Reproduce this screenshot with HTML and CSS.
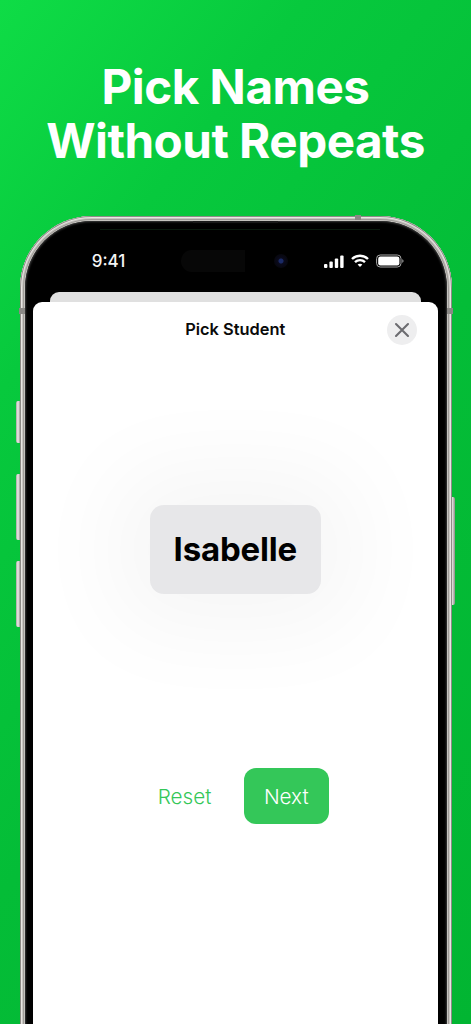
FILE: index.html
```html
<!DOCTYPE html>
<html lang="en">
<head>
<meta charset="utf-8">
<title>Pick Names Without Repeats</title>
<link rel="stylesheet" href="styles.css">
</head>
<body>
<main class="poster">
  <h1 class="headline">Pick Names<br>Without Repeats</h1>
  <div class="phone">
    <span class="side-btn btn-action"></span>
    <span class="side-btn btn-up"></span>
    <span class="side-btn btn-down"></span>
    <span class="side-btn btn-power"></span>
    <span class="band band-l"></span>
    <span class="band band-r"></span>
    <span class="band band-t"></span>
    <div class="bezel">
      <span class="speaker"></span>
      <span class="glass-line"></span>
      <div class="status">
        <span class="time">9:41</span>
        <div class="island"><span class="camera"></span></div>
        <div class="status-icons">
          <svg class="signal" width="20" height="13" viewBox="0 0 20 13"><rect x="0" y="9" width="3.4" height="4" rx="1"/><rect x="5.4" y="6.5" width="3.4" height="6.5" rx="1"/><rect x="10.8" y="3.5" width="3.4" height="9.5" rx="1"/><rect x="16.2" y="0.5" width="3.4" height="12.5" rx="1"/></svg>
          <svg class="wifi" width="18" height="14" viewBox="0 0 18 14"><path d="M1 5C5.5.6 12.500.6 17 5" /><path d="M4 8.100c2.800-2.700 7.200-2.700 10 0" /><path d="M9 13 6.600 10.600c1.300-1.100 3.500-1.100 4.800 0Z" class="wifi-dot"/></svg>
          <svg class="battery" width="28" height="14" viewBox="0 0 28 14"><rect x="0.600" y="1" width="24.400" height="12" rx="3.600" class="batt-shell"/><rect x="2.200" y="2.600" width="21.200" height="8.800" rx="2.200" class="batt-fill"/><path d="M26.200 5.200c.9.300 1.400 1 1.400 1.800s-.5 1.500-1.400 1.800Z" class="batt-cap"/></svg>
        </div>
      </div>
      <div class="screen">
        <div class="sheet-back"></div>
        <section class="sheet">
          <header class="sheet-head">
            <h2 class="sheet-title">Pick Student</h2>
            <button class="close" aria-label="Close">
              <svg width="16" height="16" viewBox="0 0 16 16"><path d="M2 2l12 12M14 2 2 14"/></svg>
            </button>
          </header>
          <div class="name-card">Isabelle</div>
          <div class="actions">
            <button class="reset">Reset</button>
            <button class="next">Next</button>
          </div>
        </section>
      </div>
    </div>
  </div>
</main>
</body>
</html>
```
FILE: styles.css
```css
* { box-sizing: border-box; }
html, body { margin: 0; padding: 0; height: 100%; }
body { overflow: hidden; font-family: Inter, "Liberation Sans", sans-serif; }
.poster {
  width: 471px;
  height: 1024px;
  overflow: hidden;
  background: linear-gradient(128deg, #0fdc46 0%, #07c93d 24%, #04bd37 55%, #02b532 100%);
  display: flex;
  flex-direction: column;
  align-items: center;
}
.headline {
  margin: 60px 0 0;
  color: #fff;
  font-size: 47.6px;
  line-height: 54px;
  font-weight: 650;
  letter-spacing: -0.5px;
  text-align: center;
  white-space: nowrap;
}
.phone {
  position: relative;
  flex: none;
  width: 432px;
  height: 900px;
  margin: 48px 0 0 0.5px;
  padding: 5px 5px 0 5px;
  border-radius: 72px 72px 0 0;
  background: #c4c2be;
  box-shadow: inset 0 0 0 1px #8e8b87, inset 0 0 0 2px #e8e6e3, inset 0 0 0 3px #c9c6c2, inset 0 0 0 4px #a09d99;
}
.side-btn {
  position: absolute;
  width: 4px;
  background: linear-gradient(90deg, #a8a5a2, #f0eeec 50%, #9b9895);
  border-radius: 2px 0 0 2px;
}
.btn-action { left: -4px; top: 185px; height: 42px; }
.btn-up { left: -4px; top: 258px; height: 66px; }
.btn-down { left: -4px; top: 345px; height: 66px; }
.btn-power {
  right: -3px; top: 281px; height: 108px; width: 3px;
  border-radius: 0 2px 2px 0;
  background: linear-gradient(90deg, #ebe9e6, #8d8a87);
}
.band { position: absolute; background: #8b8986; }
.band-l { left: -1px; top: 92px; width: 6px; height: 6px; }
.band-r { right: -1px; top: 92px; width: 6px; height: 6px; }
.band-t { left: 335px; top: -1px; width: 6px; height: 5px; }
.bezel {
  position: relative;
  height: 100%;
  padding: 0 9px 0 8px;
  background: #000;
  border-radius: 67px 67px 0 0;
  box-shadow: inset 0 0 2px 1px #3a3a3a;
  display: flex;
  flex-direction: column;
}
.speaker {
  position: absolute;
  left: 168px; top: 0;
  width: 85px; height: 2px;
  background: #1a1a1a;
}
.glass-line {
  position: absolute;
  left: 75px; top: 8px;
  width: 280px; height: 1px;
  background: #0a1a0e;
}
.status {
  flex: none;
  height: 81px;
  padding: 23px 0 0 59px;
  display: flex;
  align-items: flex-start;
  color: #fff;
}
.time { width: 91px; font-size: 17px; line-height: 34px; font-weight: 500; color: #f4f4f4; }
.island {
  width: 108px;
  height: 22px;
  margin: 6px 0 0 -2px;
  background: linear-gradient(90deg, #070707 0, #070707 64px, #000 64px);
  border-radius: 11px;
  display: flex;
  justify-content: flex-end;
  align-items: center;
  flex: none;
}
.camera {
  width: 14px; height: 14px; border-radius: 50%;
  margin-right: 1px;
  background: radial-gradient(circle, #1a2a66 0 2px, #0a0a1c 3px, #07070e 7px);
}
.status-icons { display: flex; align-items: center; gap: 7px; margin: 10px 0 0 35px; }
.signal { fill: #fff; display: block; }
.wifi { display: block; fill: none; stroke: #fff; stroke-width: 2.4; }
.wifi-dot { fill: #fff; stroke: none; }
.battery { display: block; }
.batt-shell { fill: none; stroke: #aaa; stroke-width: 1; }
.batt-fill { fill: #fff; }
.batt-cap { fill: #8f8f8f; }
.screen { position: relative; flex: 1; }
.sheet-back {
  height: 20px;
  margin: -10px 17px 0;
  background: #e0e0e0;
  border-radius: 9px 9px 0 0;
}
.sheet {
  background: #fff;
  height: 780px;
  margin-top: -10px;
  position: relative;
  border-radius: 9px 9px 0 0;
  display: flex;
  flex-direction: column;
  align-items: center;
}
.sheet-head {
  position: relative;
  width: 100%;
  height: 56px;
  display: flex;
  justify-content: center;
  padding-top: 16px;
}
.sheet-title { margin: 0; font-size: 16.4px; line-height: 22px; font-weight: 600; color: #0a0a0a; }
.close {
  position: absolute;
  right: 21px;
  top: 13px;
  width: 30px;
  height: 30px;
  padding: 0;
  border: 0;
  border-radius: 50%;
  background: #eeeeef;
  display: flex;
  align-items: center;
  justify-content: center;
}
.close svg { display: block; fill: none; stroke: #6c6c70; stroke-width: 2.1; stroke-linecap: round; }
.name-card {
  width: 171px;
  height: 89px;
  margin-top: 147px;
  padding-bottom: 2px;
  border-radius: 14px;
  background: #e7e7e9;
  color: #000;
  font-size: 33px;
  font-weight: 700;
  letter-spacing: -0.2px;
  display: flex;
  align-items: center;
  justify-content: center;
  box-shadow: 0 0 95px 36px rgba(0,0,0,0.04);
}
.actions {
  margin-top: 174px;
  display: flex;
  align-items: center;
  margin-left: 16px;
}
.reset, .next {
  border: 0;
  padding: 0;
  font-family: inherit;
  font-size: 20.7px;
  font-weight: 350;
}
.reset { background: none; color: #34c759; width: 85px; margin-right: 1px; height: 56px; text-align: left; }
.next { width: 85px; height: 56px; background: #34c759; color: #fff; border-radius: 12px; }
```
